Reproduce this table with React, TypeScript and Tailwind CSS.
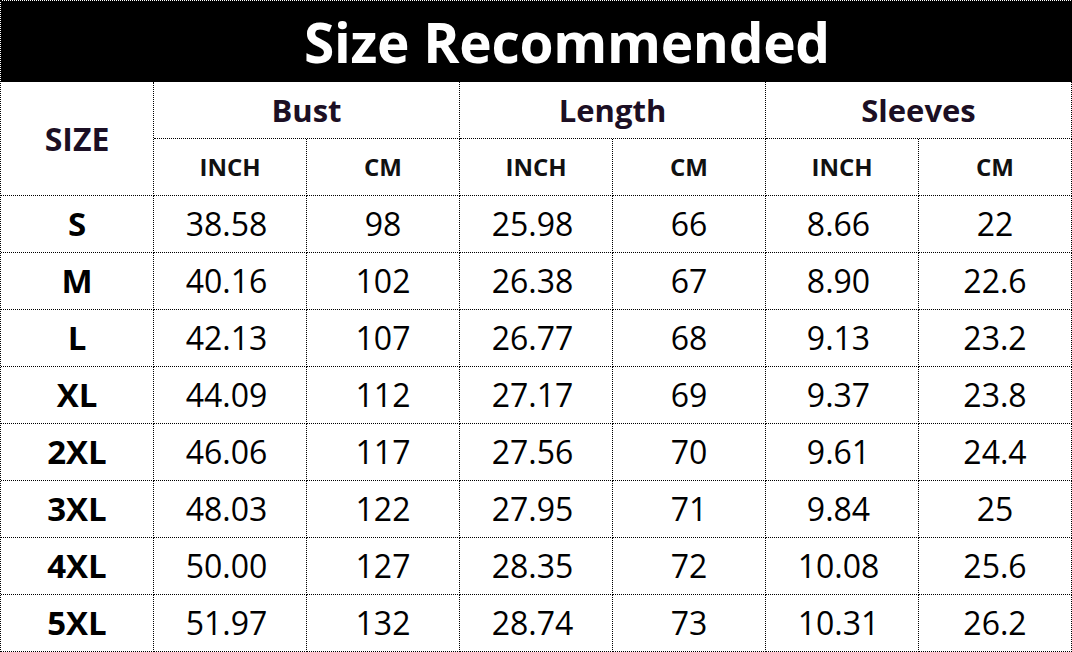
import React from "react";

const rows: [string, string, string, string, string, string, string][] = [
  ["S", "38.58", "98", "25.98", "66", "8.66", "22"],
  ["M", "40.16", "102", "26.38", "67", "8.90", "22.6"],
  ["L", "42.13", "107", "26.77", "68", "9.13", "23.2"],
  ["XL", "44.09", "112", "27.17", "69", "9.37", "23.8"],
  ["2XL", "46.06", "117", "27.56", "70", "9.61", "24.4"],
  ["3XL", "48.03", "122", "27.95", "71", "9.84", "25"],
  ["4XL", "50.00", "127", "28.35", "72", "10.08", "25.6"],
  ["5XL", "51.97", "132", "28.74", "73", "10.31", "26.2"],
];

const cell =
  "flex items-center justify-center border-r border-b border-dotted border-black h-[57px]";

export default function App() {
  return (
    <div
      className="w-[1072px] h-[652px] bg-white overflow-hidden"
      style={{ fontFamily: '"Open Sans", "Noto Sans", sans-serif' }}
    >
      <div className="grid grid-cols-[repeat(7,153px)] border-l border-t border-dotted border-black w-[1072px]">
        <div className="col-span-7 h-[81px] bg-black border-r border-b border-dotted border-black flex items-center justify-center pl-[62px]">
          <span className="text-white font-bold text-[55px] leading-none tracking-[-0.3px]">
            Size Recommended
          </span>
        </div>
        <div
          className="row-span-2 flex items-center justify-center border-r border-b border-dotted border-black h-[114px] text-[#1c0f24] font-bold text-[32px]"
        >
          SIZE
        </div>
        {["Bust", "Length", "Sleeves"].map((h) => (
          <div
            key={h}
            className={`${cell} col-span-2 text-[#1c0f24] font-bold text-[31px]`}
          >
            {h}
          </div>
        ))}
        {[0, 1, 2].map((i) => (
          <React.Fragment key={i}>
            <div className={`${cell} text-[#111] font-bold text-[24px]`}>INCH</div>
            <div className={`${cell} text-[#111] font-bold text-[24px]`}>CM</div>
          </React.Fragment>
        ))}
        {rows.map((r) => (
          <React.Fragment key={r[0]}>
            <div className={`${cell} text-black font-bold text-[33px]`}>{r[0]}</div>
            {r.slice(1).map((v, j) => (
              <div
                key={j}
                className={`${cell} text-black text-[32px] ${j % 2 === 0 ? "pr-[7px]" : "pr-0"}`}
              >
                {v}
              </div>
            ))}
          </React.Fragment>
        ))}
      </div>
    </div>
  );
}
